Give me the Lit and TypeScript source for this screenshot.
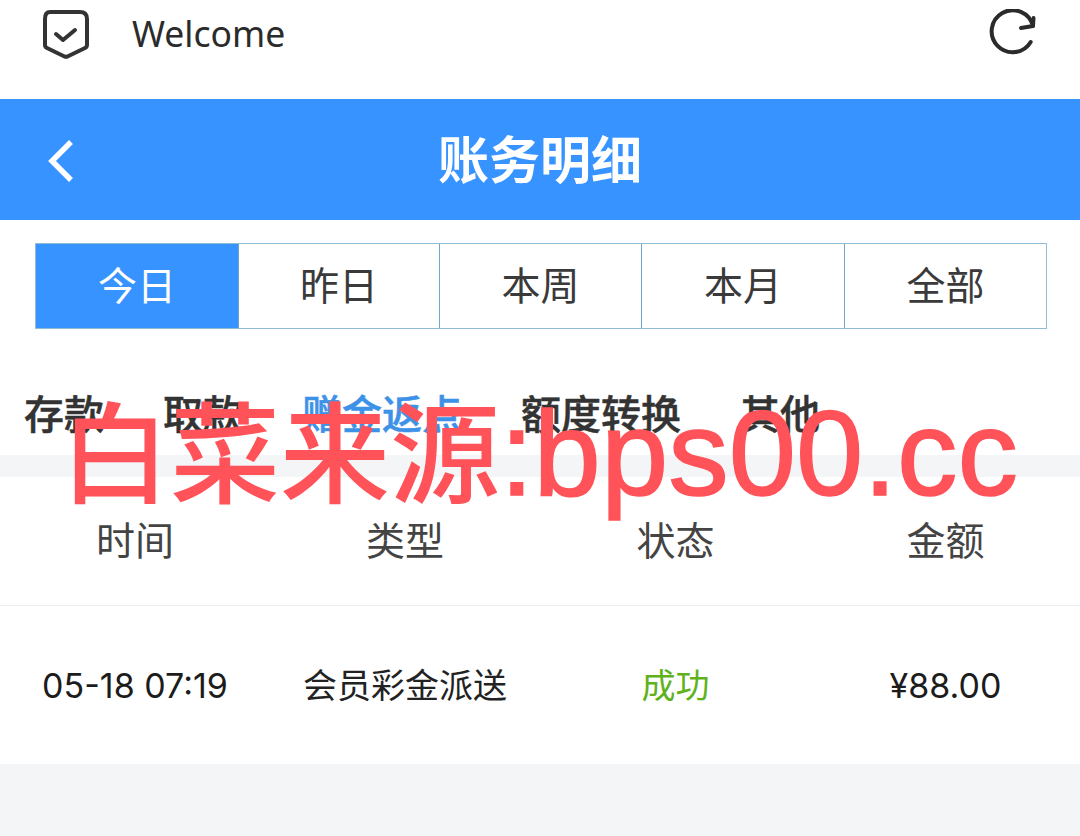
import { LitElement, html, css } from "lit";
import { customElement } from "lit/decorators.js";

@customElement("app-root")
export class AppRoot extends LitElement {
  static styles = css`
    :host { display: block; width: 1080px; height: 836px; position: relative; overflow: hidden; background: #f4f5f7; font-family: "Noto Sans CJK SC", "Noto Sans", sans-serif; }
    .status { height: 99px; background: #fff; display: flex; align-items: center; padding: 0 43px 34px 42px; box-sizing: border-box; }
    .welcome { font-family: "Noto Sans", sans-serif; font-size: 35.5px; color: #2b2b2b; margin-left: 42px; flex: 1; line-height: 40px; }
    .status svg { display: block; margin-top: 2px; }
    .nav { height: 121px; background: #3793ff; display: grid; grid-template-columns: 1fr auto 1fr; align-items: center; padding: 0 48px; box-sizing: border-box; }
    .nav svg { margin-top: 2px; }
    .title { color: #fff; font-size: 51px; font-weight: 700; line-height: 60px; position: relative; top: -3px; }
    .segwrap { background: #fff; height: 235px; box-sizing: border-box; padding-top: 23px; }
    .seg { display: grid; grid-template-columns: 202px 201px 202px 203px 202px; height: 86px; border: 1px solid #8fbcd6; box-sizing: border-box; margin: 0 33px 0 35px; }
    .seg div { display: flex; align-items: center; justify-content: center; font-size: 39px; line-height: 50px; padding-bottom: 6px; color: #3a3a3a; border-left: 1px solid #6fa6c9; }
    .seg div:first-child { border-left: 0; }
    .seg .on { background: #3793ff; color: #fff; }
    .subs { display: flex; gap: 59px; padding: 58px 0 0 24px; font-size: 40px; font-weight: 500; -webkit-text-stroke: 0.5px currentColor; color: #333; line-height: 50px; }
    .subs .on { color: #3d92e8; }
    .band { height: 22px; }
    .head, .row { display: grid; grid-template-columns: 270px 270px 271px 269px; background: #fff; align-items: center; }
    .head { height: 129px; border-bottom: 1px solid #eceef0; box-sizing: border-box; font-size: 39px; color: #444; padding-bottom: 6px; }
    .head span, .row span { display: flex; justify-content: center; white-space: nowrap; }
    .row { height: 158px; font-size: 34px; color: #222; padding-bottom: 4px; box-sizing: border-box; }
    .row .t { font-family: "Inter", sans-serif; font-size: 34px; color: #1c1c1c; padding-top: 4px; }
    .row .ok { color: #5fb21c; }
    .mark { position: absolute; left: 60px; top: 372px; font-size: 110px; line-height: 150px; color: #ff5259; white-space: nowrap; font-weight: 500; }
    .mark b { font-weight: 400; font-family: "Liberation Sans", sans-serif; font-size: 121px; -webkit-text-stroke: 1.5px #ff5259; }
  `;

  render() {
    return html`
      <div class="status">
        <svg width="48" height="50" viewBox="0 0 48 50" fill="none" stroke="#333" stroke-width="4" stroke-linejoin="round" stroke-linecap="round">
          <path d="M8 3 H38 Q45 3 45 10 V36 Q45 38 43 39 L25.5 47.5 Q24 48 22.5 47.5 L5 39 Q3 38 3 36 V10 Q3 3 8 3 Z"/>
          <path d="M14 25 L21 31 L33 21"/>
        </svg>
        <span class="welcome">Welcome</span>
        <svg width="50" height="50" viewBox="0 0 50 50" fill="none" stroke="#2b2b2b" stroke-width="4" stroke-linecap="round" stroke-linejoin="round">
          <path d="M43.7 33 A21 21 0 1 1 46 17"/>
          <path d="M34 19 L46 17 L46.5 9"/>
        </svg>
      </div>
      <div class="nav">
        <svg width="28" height="42" viewBox="0 0 28 42" fill="none" stroke="#fff" stroke-width="5.5"><path d="M23 2 L4 21 L23 40"/></svg>
        <span class="title">账务明细</span>
        <span></span>
      </div>
      <div class="segwrap">
        <div class="seg">
          <div class="on">今日</div><div>昨日</div><div>本周</div><div>本月</div><div>全部</div>
        </div>
        <div class="subs">
          <span>存款</span><span>取款</span><span class="on">赠金返点</span><span>额度转换</span><span>其他</span>
        </div>
      </div>
      <div class="band"></div>
      <div class="head"><span>时间</span><span>类型</span><span>状态</span><span>金额</span></div>
      <div class="row">
        <span class="t">05-18 07:19</span><span>会员彩金派送</span><span class="ok">成功</span><span class="t">¥88.00</span>
      </div>
      <div class="mark">白菜来源<b>:bps00.cc</b></div>
    `;
  }
}
